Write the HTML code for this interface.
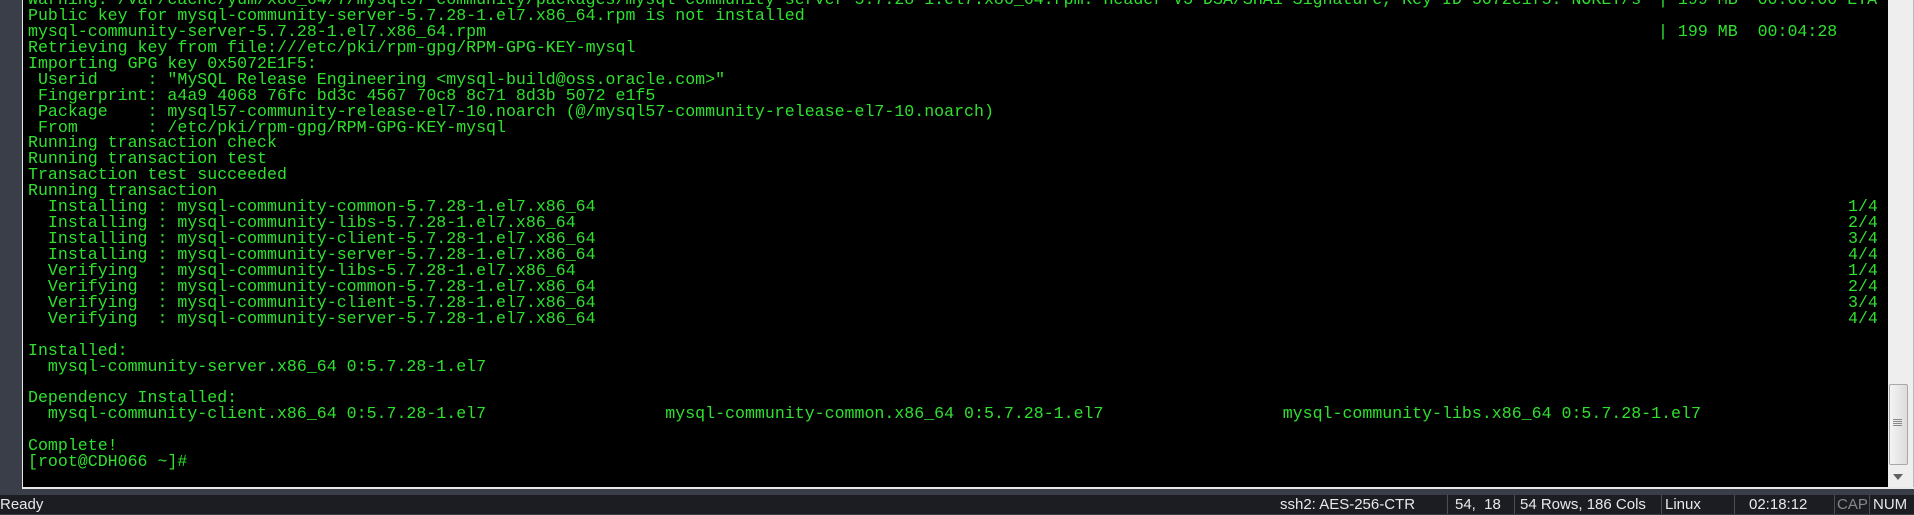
<!DOCTYPE html>
<html><head><meta charset="utf-8"><style>
html,body{margin:0;padding:0;width:1914px;height:514px;overflow:hidden;background:#3a3e48;}
#term{position:absolute;left:22px;top:0;width:1866px;height:487px;background:#000;border-left:1px solid #e8e8e8;overflow:hidden;}
#bl{position:absolute;left:22px;top:487px;width:1892px;height:2px;background:#e8e8e8;}
#lines{position:absolute;left:5px;top:-8px;font-family:"Liberation Mono",monospace;font-size:16.6px;line-height:15.93px;color:#2fe02f;white-space:pre;}
.r{position:absolute;font-family:"Liberation Mono",monospace;font-size:16.6px;line-height:15.93px;color:#2fe02f;white-space:pre;}
#sb{position:absolute;left:1888px;top:0;width:25px;height:487px;background:#eeeeee;border-right:1px solid #bbb;}
#thumb{position:absolute;left:1889px;top:384px;width:17px;height:79px;background:linear-gradient(90deg,#f4f4f4,#dcdcdc);border:1px solid #a8a8a8;border-radius:2px;}
#grip{position:absolute;left:1893px;top:419px;width:9px;height:8px;background:repeating-linear-gradient(#888 0 1px,transparent 1px 2px);}
#arrow{position:absolute;left:1893px;top:474px;width:0;height:0;border-left:5px solid transparent;border-right:5px solid transparent;border-top:6px solid #606060;}
#status{position:absolute;left:0;top:495px;width:1914px;height:19px;background:#1b1d23;font-family:"Liberation Sans",sans-serif;font-size:15px;color:#e8e8e8;}
#status span{position:absolute;top:0;line-height:20px;}
.sep{position:absolute;top:0;width:1px;height:19px;background:#4a4e58;}
</style></head><body>
<div id="term"><div id="lines">Warning: /var/cache/yum/x86_64/7/mysql57-community/packages/mysql-community-server-5.7.28-1.el7.x86_64.rpm: Header V3 DSA/SHA1 Signature, Key ID 5072e1f5: NOKEY/s
Public key for mysql-community-server-5.7.28-1.el7.x86_64.rpm is not installed
mysql-community-server-5.7.28-1.el7.x86_64.rpm
Retrieving key from file:///etc/pki/rpm-gpg/RPM-GPG-KEY-mysql
Importing GPG key 0x5072E1F5:
 Userid     : "MySQL Release Engineering &lt;mysql-build@oss.oracle.com&gt;"
 Fingerprint: a4a9 4068 76fc bd3c 4567 70c8 8c71 8d3b 5072 e1f5
 Package    : mysql57-community-release-el7-10.noarch (@/mysql57-community-release-el7-10.noarch)
 From       : /etc/pki/rpm-gpg/RPM-GPG-KEY-mysql
Running transaction check
Running transaction test
Transaction test succeeded
Running transaction
  Installing : mysql-community-common-5.7.28-1.el7.x86_64
  Installing : mysql-community-libs-5.7.28-1.el7.x86_64
  Installing : mysql-community-client-5.7.28-1.el7.x86_64
  Installing : mysql-community-server-5.7.28-1.el7.x86_64
  Verifying  : mysql-community-libs-5.7.28-1.el7.x86_64
  Verifying  : mysql-community-common-5.7.28-1.el7.x86_64
  Verifying  : mysql-community-client-5.7.28-1.el7.x86_64
  Verifying  : mysql-community-server-5.7.28-1.el7.x86_64

Installed:
  mysql-community-server.x86_64 0:5.7.28-1.el7

Dependency Installed:
  mysql-community-client.x86_64 0:5.7.28-1.el7                  mysql-community-common.x86_64 0:5.7.28-1.el7                  mysql-community-libs.x86_64 0:5.7.28-1.el7

Complete!
[root@CDH066 ~]#</div>
<div class="r" style="left:1635px;top:-8px">| 199 MB  00:00:00 ETA</div>
<div class="r" style="left:1635px;top:23.86px">| 199 MB  00:04:28</div>
<div class="r" style="left:1825px;top:199px">1/4
2/4
3/4
4/4
1/4
2/4
3/4
4/4</div>
</div>
<div id="sb"></div><div id="thumb"></div><div id="grip"></div><div id="arrow"></div>
<div id="bl"></div>
<div id="status">
<span style="left:0">Ready</span>
<span style="left:1280px">ssh2: AES-256-CTR</span>
<div class="sep" style="left:1447px"></div>
<span style="left:1455px">54,&nbsp; 18</span>
<div class="sep" style="left:1514px"></div>
<span style="left:1520px">54 Rows, 186 Cols</span>
<div class="sep" style="left:1661px"></div>
<span style="left:1665px">Linux</span>
<div class="sep" style="left:1734px"></div>
<span style="left:1749px">02:18:12</span>
<div class="sep" style="left:1834px"></div>
<span style="left:1837px;color:#888">CAP</span>
<div class="sep" style="left:1869px"></div>
<span style="left:1873px">NUM</span>
</div>
</body></html>
